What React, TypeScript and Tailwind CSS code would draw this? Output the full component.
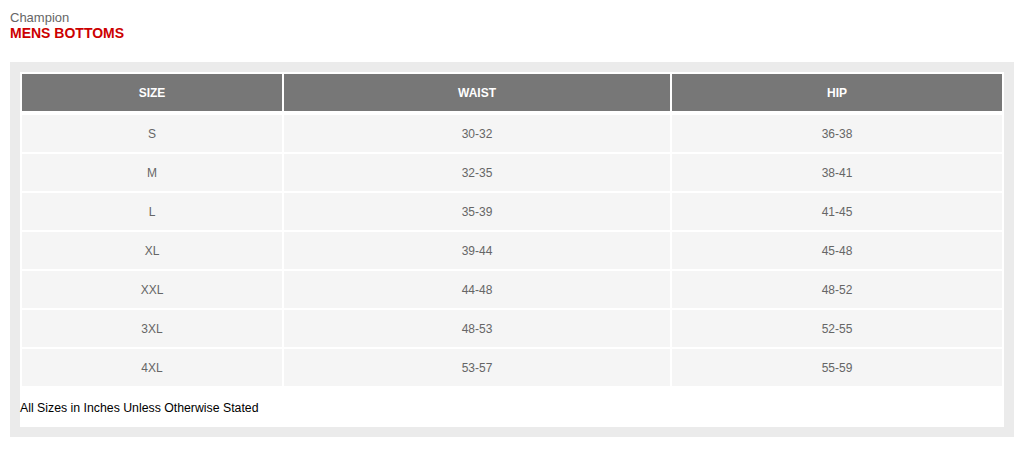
const rows = [
  ['S', '30-32', '36-38'],
  ['M', '32-35', '38-41'],
  ['L', '35-39', '41-45'],
  ['XL', '39-44', '45-48'],
  ['XXL', '44-48', '48-52'],
  ['3XL', '48-53', '52-55'],
  ['4XL', '53-57', '55-59'],
]

export default function App() {
  return (
    <div className="min-h-screen bg-white px-[10px] pt-[10px] font-['Liberation_Sans',Arial,sans-serif]">
      {/* Title */}
      <div className="text-[13px] leading-[15px] text-[#666]">Champion</div>
      <div className="text-[14px] leading-[16px] font-bold text-[#cc0000]">MENS BOTTOMS</div>

      {/* Size chart */}
      <div className="mt-[21px] bg-[#ebebeb] p-[10px]">
        <div className="bg-white">
          <table className="w-full border-separate border-spacing-[2px] text-[12px]">
            <thead>
              <tr>
                <th className="w-[260px] h-[39px] border-b-2 border-white bg-[#777] p-0 font-bold text-white">SIZE</th>
                <th className="w-[386px] h-[39px] border-b-2 border-white bg-[#777] p-0 font-bold text-white">WAIST</th>
                <th className="w-[330px] h-[39px] border-b-2 border-white bg-[#777] p-0 font-bold text-white">HIP</th>
              </tr>
            </thead>
            <tbody>
              {rows.map((r) => (
                <tr key={r[0]}>
                  {r.map((c, i) => (
                    <td key={i} className="h-[37px] bg-[#f5f5f5] p-0 text-center text-[#666]">
                      {c}
                    </td>
                  ))}
                </tr>
              ))}
            </tbody>
          </table>
          <p className="pt-[13px] pb-[12px] text-[12.3px] leading-[14px] text-black">
            All Sizes in Inches Unless Otherwise Stated
          </p>
        </div>
      </div>
    </div>
  )
}
